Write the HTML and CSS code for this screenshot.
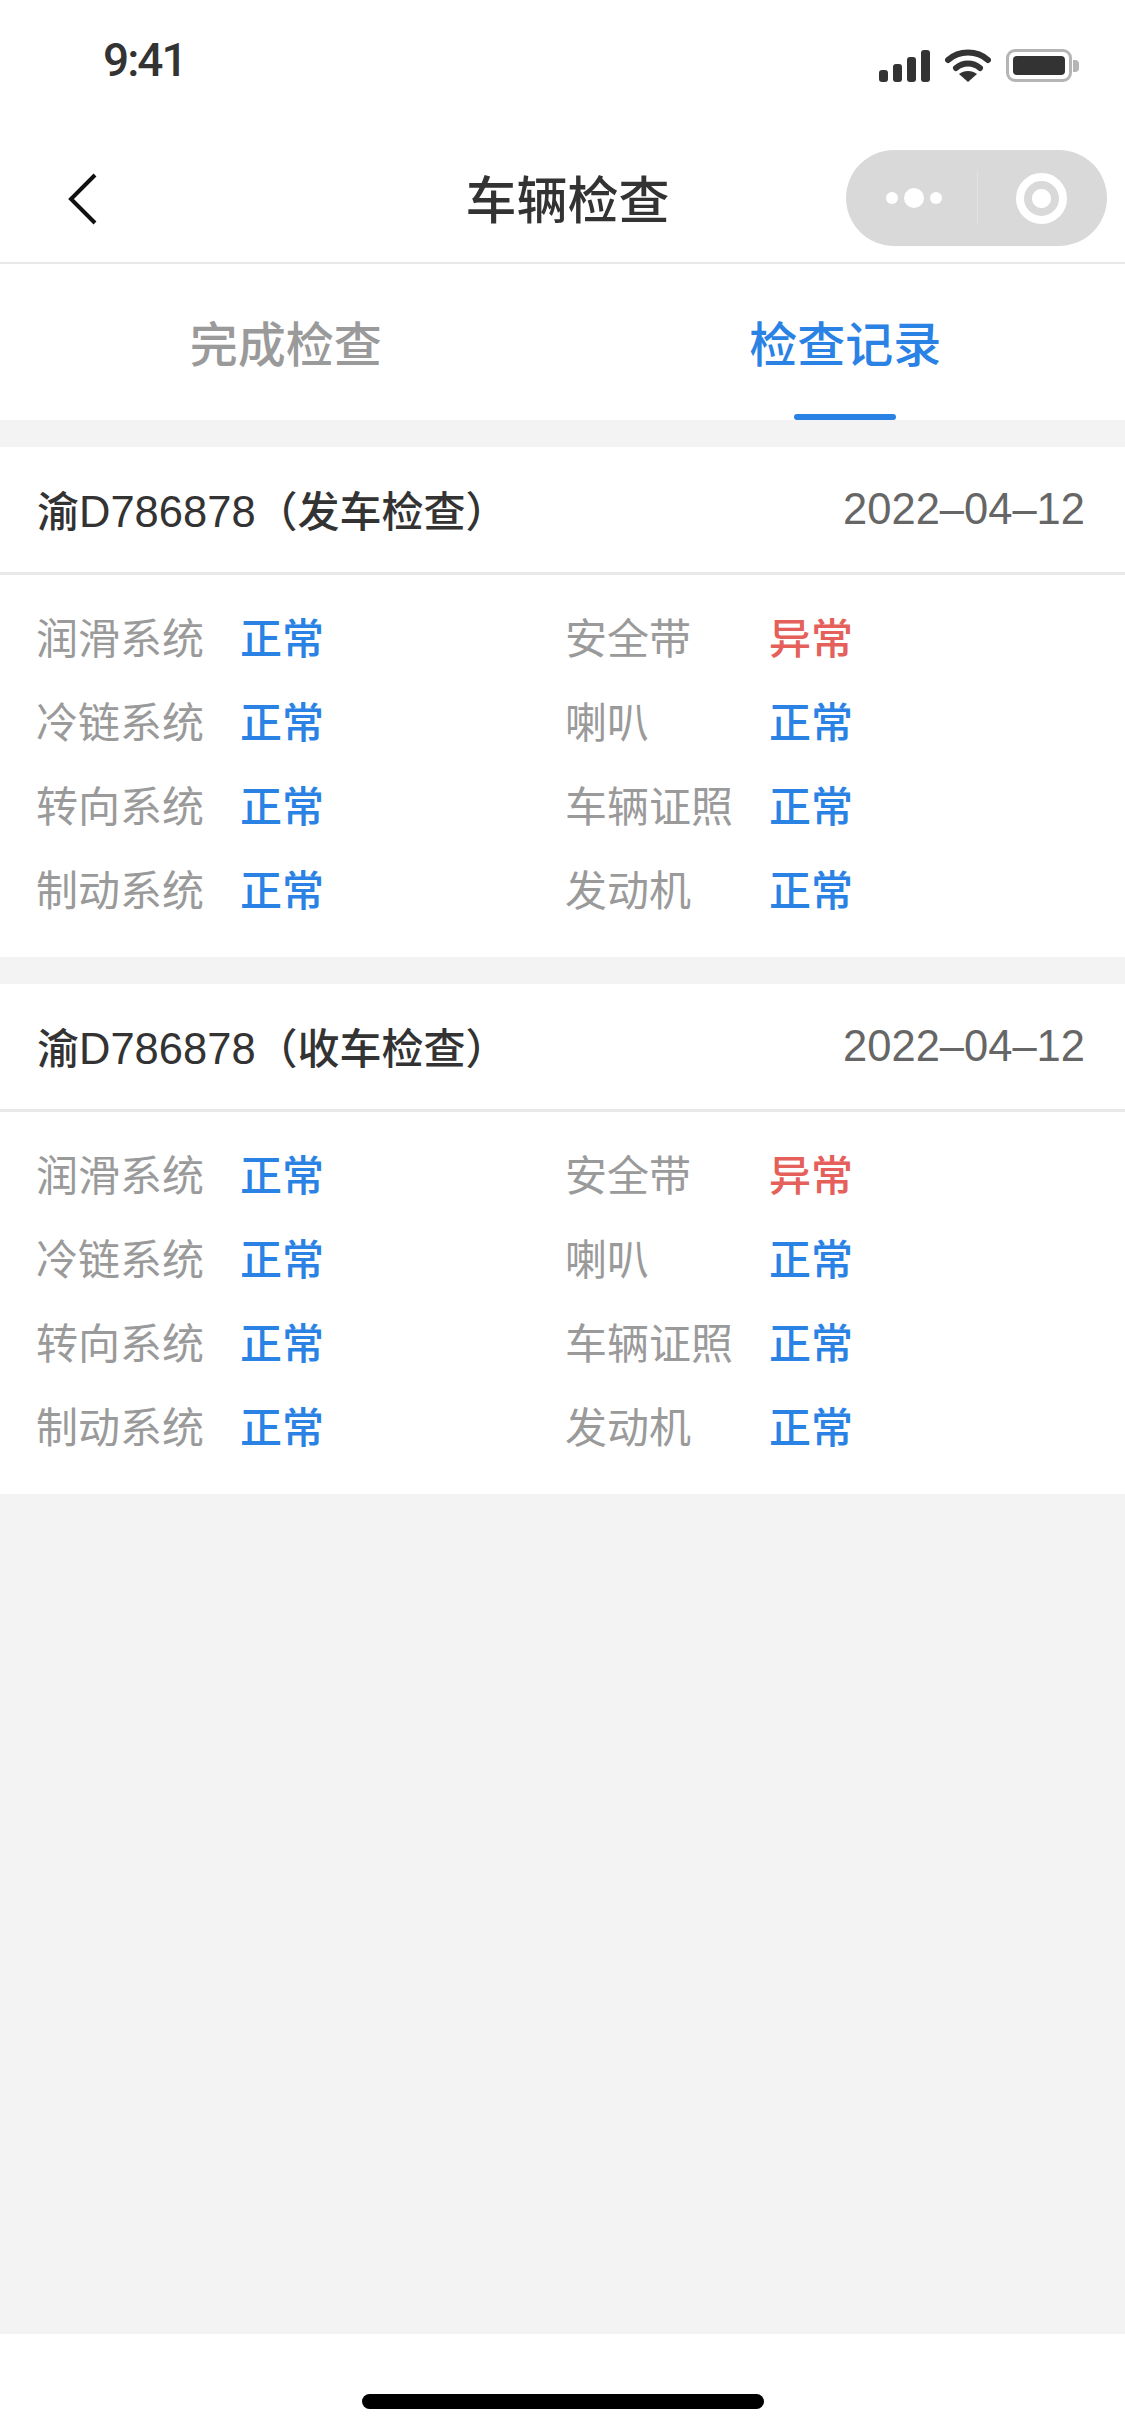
FILE: index.html
```html
<!DOCTYPE html>
<html>

<head>
    <meta name="viewport" charset="utf-8" content="width=device-width, initial-scale=1.0" />
    <title>车辆检查</title>
    <link rel="stylesheet" href="styles.css">
</head>

<body>
    <div class="status-bar">
        <span class="time">9:41</span>
        <div class="status-icons">
            <svg width="51" height="32" viewBox="0 0 51 32">
                <rect x="0" y="20" width="9" height="12" rx="3" fill="#333" />
                <rect x="14" y="14" width="9" height="18" rx="3" fill="#333" />
                <rect x="28" y="7" width="9" height="25" rx="3" fill="#333" />
                <rect x="42" y="0" width="9" height="32" rx="3" fill="#333" />
            </svg>
            <svg width="46" height="33" viewBox="0 0 46 33">
                <path d="M3 11 C14 1 32 1 43 11" fill="none" stroke="#333" stroke-width="6" stroke-linecap="round" />
                <path d="M11 19 C18 13 28 13 35 19" fill="none" stroke="#333" stroke-width="6" stroke-linecap="round" />
                <path d="M23 33 L14 25 C19 21 27 21 32 25 Z" fill="#333" />
            </svg>
            <div class="battery">
                <div class="battery-body"><div class="battery-level"></div></div>
                <div class="battery-cap"></div>
            </div>
        </div>
    </div>

    <div class="nav-bar">
        <svg class="back" width="30" height="52" viewBox="0 0 30 52">
            <path d="M27 2 L3 26 L27 50" fill="none" stroke="#111" stroke-width="4" />
        </svg>
        <div class="nav-title">车辆检查</div>
        <div class="capsule">
            <div class="capsule-left">
                <span class="dot"></span><span class="dot dot-big"></span><span class="dot"></span>
            </div>
            <div class="capsule-line"></div>
            <div class="capsule-right"><div class="ring"></div></div>
        </div>
    </div>

    <div class="tabs">
        <div class="tab">完成检查</div>
        <div class="tab tab-active">检查记录</div>
    </div>

    <div class="content">
        <div class="card">
            <div class="card-head">
                <span class="card-title">渝<span class="plate">D786878</span>（发车检查）</span>
                <span class="card-date">2022–04–12</span>
            </div>
            <div class="card-body">
                <div class="item"><span class="label">润滑系统</span><span class="ok">正常</span></div>
                <div class="item"><span class="label">安全带</span><span class="bad">异常</span></div>
                <div class="item"><span class="label">冷链系统</span><span class="ok">正常</span></div>
                <div class="item"><span class="label">喇叭</span><span class="ok">正常</span></div>
                <div class="item"><span class="label">转向系统</span><span class="ok">正常</span></div>
                <div class="item"><span class="label">车辆证照</span><span class="ok">正常</span></div>
                <div class="item"><span class="label">制动系统</span><span class="ok">正常</span></div>
                <div class="item"><span class="label">发动机</span><span class="ok">正常</span></div>
            </div>
        </div>
        <div class="card">
            <div class="card-head">
                <span class="card-title">渝<span class="plate">D786878</span>（收车检查）</span>
                <span class="card-date">2022–04–12</span>
            </div>
            <div class="card-body">
                <div class="item"><span class="label">润滑系统</span><span class="ok">正常</span></div>
                <div class="item"><span class="label">安全带</span><span class="bad">异常</span></div>
                <div class="item"><span class="label">冷链系统</span><span class="ok">正常</span></div>
                <div class="item"><span class="label">喇叭</span><span class="ok">正常</span></div>
                <div class="item"><span class="label">转向系统</span><span class="ok">正常</span></div>
                <div class="item"><span class="label">车辆证照</span><span class="ok">正常</span></div>
                <div class="item"><span class="label">制动系统</span><span class="ok">正常</span></div>
                <div class="item"><span class="label">发动机</span><span class="ok">正常</span></div>
            </div>
        </div>
    </div>

    <div class="home-area">
        <div class="home-bar"></div>
    </div>
</body>

</html>
```

FILE: styles.css
```css
* {
    box-sizing: border-box;
}

body {
    margin: 0;
    padding: 0;
    width: 1125px;
    height: 2436px;
    display: flex;
    flex-direction: column;
    background-color: #ffffff;
    font-family: "Liberation Sans", "Noto Sans CJK SC", sans-serif;
    overflow: hidden;
}

.status-bar {
    height: 132px;
    padding: 0 46px 0 103px;
    display: flex;
    justify-content: space-between;
    align-items: flex-start;
}

.time {
    margin-top: 34px;
    font-family: Roboto, sans-serif;
    font-size: 46px;
    font-weight: 500;
    letter-spacing: -2px;
    line-height: 52px;
    color: #333;
}

.status-icons {
    margin-top: 49px;
    display: flex;
    align-items: center;
    gap: 15px;
}

.battery {
    display: flex;
    align-items: center;
    gap: 1px;
}

.battery-body {
    width: 66px;
    height: 33px;
    padding: 4px;
    border: 3px solid #b5b5b5;
    border-radius: 9px;
}

.battery-level {
    height: 100%;
    background-color: #333;
    border-radius: 4px;
}

.battery-cap {
    width: 6px;
    height: 12px;
    background-color: #b5b5b5;
    border-radius: 0 4px 4px 0;
}

.nav-bar {
    height: 132px;
    padding: 0 18px 0 68px;
    display: flex;
    align-items: center;
    position: relative;
    border-bottom: 2px solid #e8e8e8;
}

.back {
    margin-top: 4px;
}

.nav-title {
    position: absolute;
    left: 10px;
    right: 0;
    text-align: center;
    font-size: 51px;
    color: #333;
    font-weight: 500;
}

.capsule {
    margin-left: auto;
    margin-top: 2px;
    width: 261px;
    height: 96px;
    background-color: #d9d9d9;
    border-radius: 48px;
    display: flex;
    align-items: center;
    position: relative;
}

.capsule-left {
    width: 131px;
    display: flex;
    justify-content: center;
    align-items: center;
    gap: 6px;
    padding-left: 5px;
}

.dot {
    width: 12px;
    height: 12px;
    border-radius: 50%;
    background-color: #fff;
}

.dot-big {
    width: 20px;
    height: 20px;
}

.capsule-line {
    width: 1px;
    height: 54px;
    background-color: #e2e2e2;
}

.capsule-right {
    flex: 1;
    display: flex;
    justify-content: center;
    padding-right: 3px;
}

.ring {
    width: 51px;
    height: 51px;
    border-radius: 50%;
    border: 8px solid #fff;
    background: radial-gradient(circle, #fff 0, #fff 9px, #d9d9d9 10px);
}

.tabs {
    height: 156px;
    display: flex;
    padding-left: 6px;
}

.tab {
    flex: 1;
    text-align: center;
    padding-top: 50px;
    font-size: 48px;
    line-height: 64px;
    font-weight: 500;
    color: #9a9a9a;
    position: relative;
}

.tab-active {
    color: #2a82e4;
}

.tab-active::after {
    content: "";
    position: absolute;
    left: 50%;
    bottom: 0;
    width: 102px;
    height: 6px;
    margin-left: -51px;
    background-color: #2a82e4;
    border-radius: 3px;
}

.content {
    flex: 1;
    background-color: #f3f3f3;
    padding-top: 27px;
    display: flex;
    flex-direction: column;
    gap: 27px;
}

.card {
    background-color: #fff;
}

.card-head {
    height: 128px;
    padding: 0 40px 0 37px;
    display: flex;
    justify-content: space-between;
    align-items: center;
    border-bottom: 3px solid #e8e8e8;
}

.card-title {
    font-size: 42px;
    font-weight: 500;
    color: #333;
    margin-top: -2px;
}

.plate {
    font-size: 43.5px;
}

.card-date {
    font-size: 43.5px;
    color: #666;
}

.card-body {
    padding: 18px 0 28px 36px;
    display: grid;
    grid-template-columns: 529px 1fr;
}

.item {
    height: 84px;
    display: flex;
    align-items: center;
    font-size: 42px;
}

.label {
    width: 204px;
    color: #9a9a9a;
}

.ok {
    color: #2a82e4;
    font-weight: 500;
}

.bad {
    color: #e5605a;
    font-weight: 500;
}

.home-area {
    height: 102px;
    display: flex;
    justify-content: center;
    padding-top: 60px;
}

.home-bar {
    width: 402px;
    height: 15px;
    background-color: #000;
    border-radius: 8px;
}
```
